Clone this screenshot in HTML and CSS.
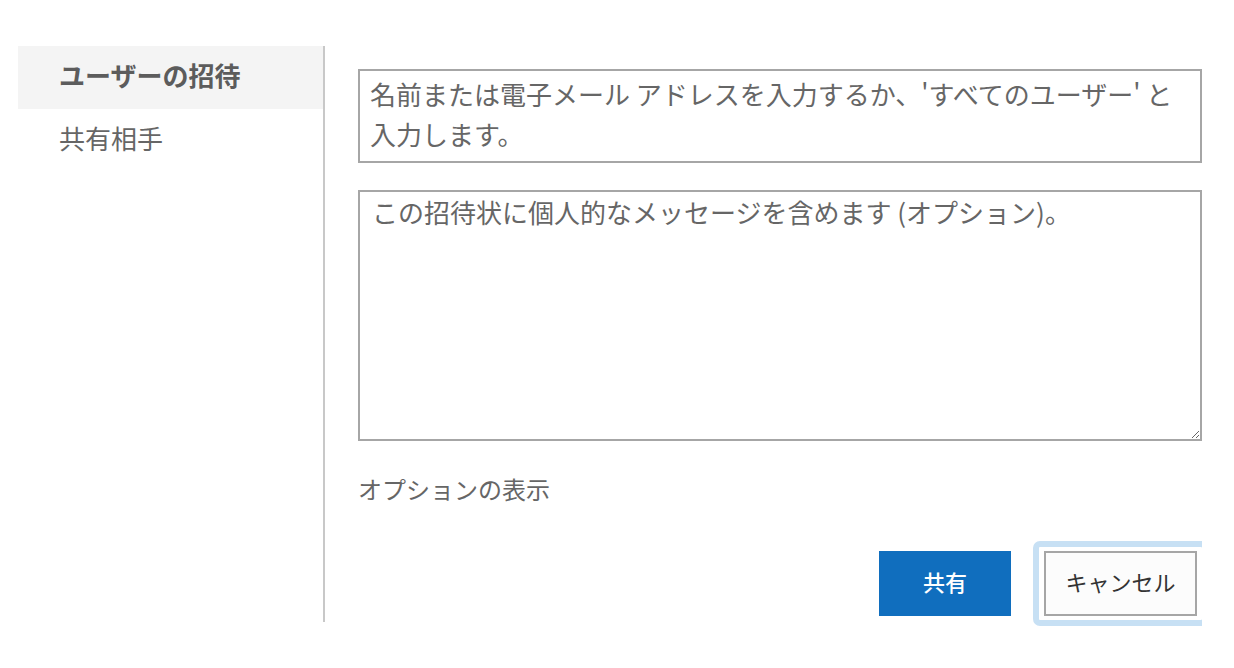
FILE: index.html
```html
<!DOCTYPE html>
<html lang="ja">
<head>
<meta charset="utf-8">
<title>ユーザーの招待</title>
<link rel="stylesheet" href="styles.css">
</head>
<body>
<div class="dialog">
  <nav class="nav">
    <div class="nav-item selected">ユーザーの招待</div>
    <div class="nav-item">共有相手</div>
  </nav>
  <main class="content">
    <textarea class="people" placeholder="名前または電子メール アドレスを入力するか、'すべてのユーザー' と入力します。"></textarea>
    <textarea class="message" placeholder="この招待状に個人的なメッセージを含めます (オプション)。"></textarea>
    <div class="options">オプションの表示</div>
    <div class="actions">
      <button class="btn primary">共有</button>
      <span class="focus-ring"><button class="btn secondary">キャンセル</button></span>
    </div>
  </main>
</div>
</body>
</html>
```

FILE: styles.css
```css
* { box-sizing: border-box; }
html, body { margin: 0; padding: 0; background: #fff; }
body {
  font-family: "Noto Sans CJK JP", "Noto Sans", sans-serif;
  color: #666;
}
.dialog {
  display: flex;
  align-items: flex-start;
  margin: 46px 0 0 18px;
}
.nav {
  width: 307px;
  height: 576px;
  flex: none;
  border-right: 2px solid #c8c8c8;
}
.nav-item {
  height: 63px;
  line-height: 58px;
  padding-left: 41px;
  font-size: 26px;
  color: #666;
}
.nav-item.selected {
  background: #f4f4f4;
  font-weight: 700;
  color: #5c5c5c;
}
.content {
  width: 844px;
  margin-left: 33px;
  padding-top: 23px;
  display: flex;
  flex-direction: column;
  overflow-x: clip;
}
textarea {
  display: block;
  width: 100%;
  border: 2px solid #a6a6a6;
  border-radius: 0;
  font-family: "Noto Sans CJK JP", "Noto Sans", sans-serif;
  font-size: 26px;
  color: #333;
  background: #fff;
  outline: none;
  margin: 0;
}
textarea::placeholder { color: #666; opacity: 1; }
.people {
  height: 94px;
  padding: 3px 10px 7px;
  line-height: 40px;
  resize: none;
  overflow: hidden;
}
.message {
  height: 251px;
  margin-top: 27px;
  padding: 0 12px;
  line-height: 40px;
  resize: both;
}
.options {
  margin-top: 33px;
  height: 30px;
  line-height: 30px;
  font-size: 24px;
  color: #666;
}
.actions {
  margin-top: 37px;
  display: flex;
  justify-content: flex-end;
  align-items: center;
}
.btn {
  height: 65px;
  padding: 0 0 5px;
  font-family: "Noto Sans CJK JP", "Noto Sans", sans-serif;
  font-size: 22px;
  margin: 0;
  cursor: pointer;
}
.primary {
  width: 132px;
  background: #106ebe;
  border: none;
  color: #fff;
  font-weight: 500;
}
.focus-ring {
  display: block;
  margin-left: 22px;
  margin-right: -6px;
  border: 6px solid #c7e0f4;
  border-radius: 7px;
  padding: 4px 5px;
}
.secondary {
  display: block;
  width: 153px;
  background: #fcfcfc;
  border: 2px solid #a6a6a6;
  color: #333;
}
```
